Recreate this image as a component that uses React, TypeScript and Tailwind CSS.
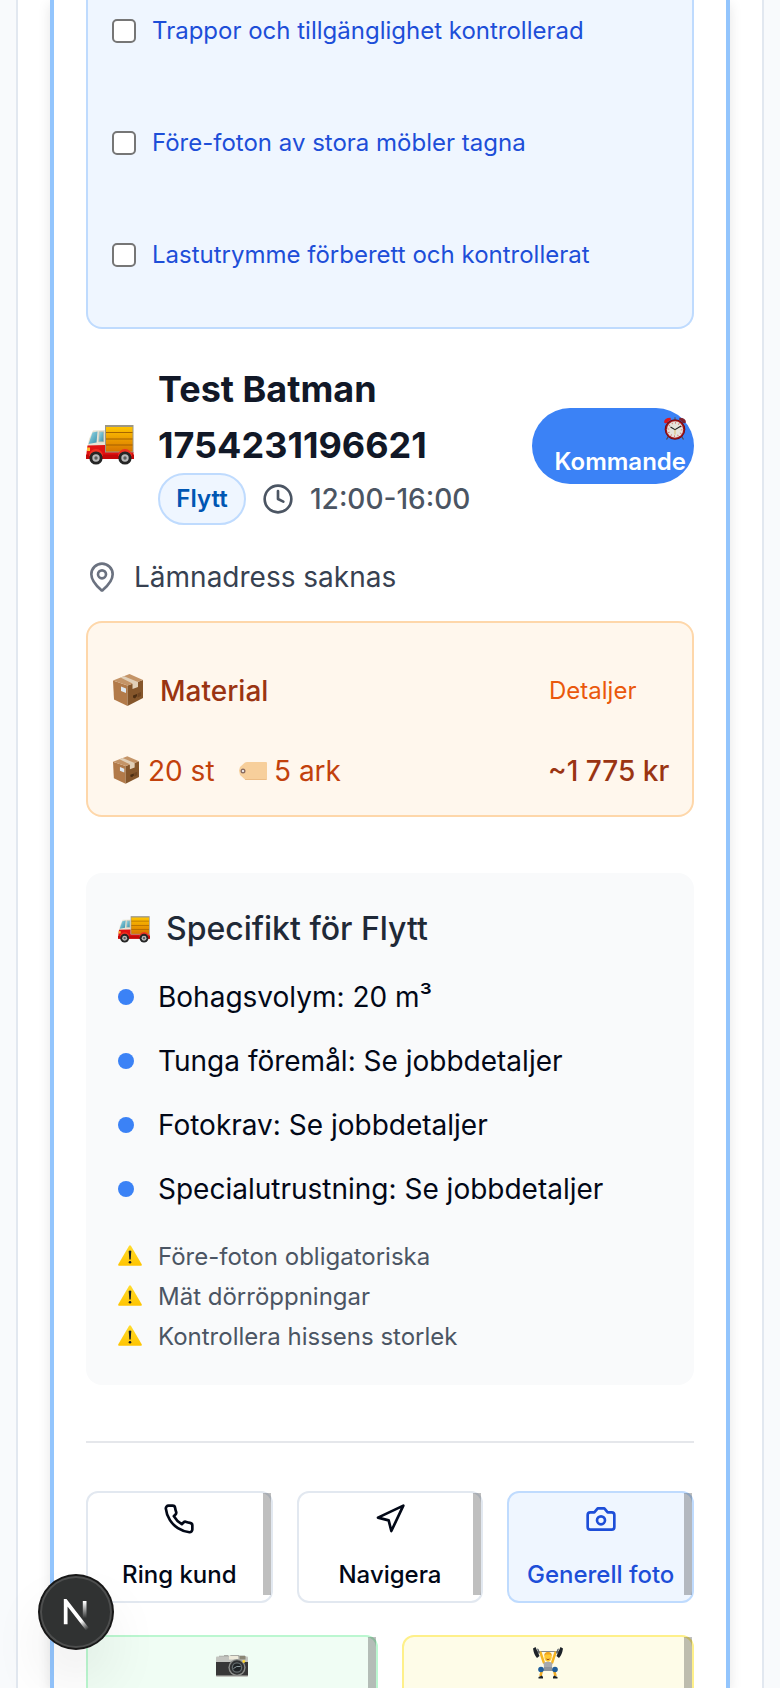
import React from "react";

const checks = [
  "Trappor och tillgänglighet kontrollerad",
  "Före-foton av stora möbler tagna",
  "Lastutrymme förberett och kontrollerat",
];

const details = [
  "Bohagsvolym: 20 m³",
  "Tunga föremål: Se jobbdetaljer",
  "Fotokrav: Se jobbdetaljer",
  "Specialutrustning: Se jobbdetaljer",
];

const warnings = ["Före-foton obligatoriska", "Mät dörröppningar", "Kontrollera hissens storlek"];

function Truck({ className }: { className: string }) {
  return (
    <svg viewBox="0 0 48 40" className={className}>
      <defs>
        <linearGradient id="cargo" x1="0" y1="0" x2="0" y2="1">
          <stop offset="0" stopColor="#ffc400" />
          <stop offset="1" stopColor="#d87500" />
        </linearGradient>
        <linearGradient id="glass" x1="0" y1="0" x2="1" y2="1">
          <stop offset="0" stopColor="#9adcea" />
          <stop offset="1" stopColor="#3a8fa8" />
        </linearGradient>
      </defs>
      <path d="M7 5.5 19 5v17H1.5L3 14z" fill="#e9e4d4" />
      <path d="M6.5 7.5 11.5 6.5 10.5 17.5 2.5 19z" fill="url(#glass)" />
      <path d="M13.3 6.8h4.4v10h-5z" fill="url(#glass)" stroke="#b7b7a5" strokeWidth=".6" />
      <path d="M1.5 20.5 19 20v7h28.5v6.500H.5V28z" fill="#e01212" />
      <path d="M0 29.500h48V34H0z" fill="#c40808" />
      <path d="M1 22.500h3v3.500H1z" fill="#ffb931" />
      <rect x="19" y="0" width="28.500" height="27.500" fill="#9c9684" />
      <rect x="20" y="2" width="26.500" height="24.500" fill="url(#cargo)" />
      <path d="M20 7.500h26.500M20 14h26.500M20 20h26.500" stroke="#9d5c00" strokeWidth=".9" />
      <path d="M3 31a7 7 0 0 1 14 0M32 31a7 7 0 0 1 14 0" fill="#ef2f20" />
      <circle cx="10" cy="33" r="6.600" fill="#252525" />
      <circle cx="10" cy="33" r="3.700" fill="#b9b9b9" />
      <circle cx="10" cy="33" r="1.700" fill="#5d5d5d" />
      <circle cx="39" cy="33" r="6.600" fill="#252525" />
      <circle cx="39" cy="33" r="3.700" fill="#b9b9b9" />
      <circle cx="39" cy="33" r="1.700" fill="#5d5d5d" />
    </svg>
  );
}

function Parcel({ className }: { className: string }) {
  return (
    <svg viewBox="0 0 30 32" className={className}>
      <path d="M0 6.500 14.500 11.500V32L1 25.500z" fill="#b27a49" />
      <path d="M14.500 11.500 30 6v18L14.500 32z" fill="#85562b" />
      <path d="M0 6.500 16.500 0 30 6 14.500 11.500z" fill="#c49467" />
      <path d="M7.500 3.600 11 2.200 25 8v5l-5.500 2V9.500z" fill="#e0cfb8" />
      <path d="M8 12.500 13 14.500v4.500L8 17z" fill="#dfe9f2" />
      <path d="M20 21.500 24 20v2l-2 2.500-2-1z" fill="#4b2d12" />
      <path d="M24.500 19.500 28 18v4l-3.500 1.500z" fill="#704521" />
    </svg>
  );
}

function Tag() {
  return (
    <svg viewBox="0 0 28 18" className="h-[18px] w-7">
      <path d="M0 8.500 1 5 6 .5Q7 0 8 0h19q1 0 1 1v16q0 1-1 1H8q-1 0-2-.5L1 13z" fill="#f7cf9b" />
      <path d="M6 17.500h21.500" stroke="#e8b87d" strokeWidth=".8" />
      <circle cx="4" cy="9" r="2.500" fill="#8b6d62" />
      <circle cx="4" cy="9" r="1.100" fill="#fff" />
    </svg>
  );
}

function AlarmClock() {
  return (
    <svg viewBox="0 0 22 24" className="h-6 w-[22px]">
      <path d="m4 20-1.500 2.500M18 20l1.500 2.500" stroke="#4a4a50" strokeWidth="1.200" />
      <path d="M0 5.500Q0 1 6.500.8L7 2.500 2 6.500z" fill="#e0141c" />
      <path d="M22 5.500Q22 1 15.500.8L15 2.500 20 6.500z" fill="#7f2230" />
      <path d="M11 .3v2" stroke="#555" strokeWidth="1.200" />
      <circle cx="11" cy="12.500" r="10.300" fill="#6d0a0e" />
      <circle cx="11" cy="12.500" r="9.600" fill="#a01217" />
      <circle cx="11" cy="12.500" r="8.200" fill="#e6e3dc" />
      <circle cx="11" cy="12.500" r="6.700" fill="none" stroke="#cc6a62" strokeWidth="1.700" strokeDasharray=".8 2.708" />
      <path d="m6.500 10 4.500 2.700 6-3.700" fill="none" stroke="#222" strokeWidth="1.100" />
      <path d="M11 12.500v5" stroke="#d8a93a" strokeWidth=".7" />
    </svg>
  );
}

function Warning() {
  return (
    <svg viewBox="0 0 24 21" className="mb-[3px] h-[21px] w-6 shrink-0">
      <defs>
        <linearGradient id="warn" x1="0" y1="0" x2="0" y2="1">
          <stop offset="0" stopColor="#ffdc2e" />
          <stop offset="1" stopColor="#ffc400" />
        </linearGradient>
      </defs>
      <path d="M11.100.8q.9-1.300 1.800 0L23.700 19.200Q24.200 20.700 23 20.800H1Q-.2 20.700.3 19.200z" fill="url(#warn)" />
      <path d="M10.700 6q1.300-1.200 2.600 0l-.6 8.500h-1.400z" fill="#151c24" />
      <circle cx="12" cy="17.300" r="1.300" fill="#151c24" />
    </svg>
  );
}

function PhotoCamera() {
  return (
    <svg viewBox="0 0 32 22" className="h-[22px] w-8">
      <path d="M3 .8h5V0h4l1 1 2-1h8v.5h6V3H3z" fill="#a9aaa5" />
      <rect x="0" y="1.500" width="32" height="20.500" rx="1" fill="#c3c4bf" />
      <rect x="0" y="7" width="32" height="13.500" fill="#373737" />
      <rect x="13" y="1" width="9" height="3.500" fill="#eeeadb" />
      <rect x="23.500" y="1" width="6" height="3.500" fill="#8b8675" />
      <circle cx="21" cy="12.500" r="8.600" fill="#8c8e8b" />
      <circle cx="21" cy="12.500" r="7.200" fill="#303233" />
      <circle cx="21" cy="12.500" r="5.300" fill="#626a6c" />
      <circle cx="21" cy="12.500" r="4" fill="#1e2224" />
      <path d="M17.500 13.500q3-3 7-2" stroke="#8b999c" strokeWidth="1" fill="none" />
      <circle cx="27.800" cy="6.500" r="1.400" fill="#ffd52f" />
    </svg>
  );
}

function Lifter() {
  return (
    <svg viewBox="0 0 30 32" className="h-8 w-[30px]">
      <path d="M4 4.500h22" stroke="#777b80" strokeWidth=".9" />
      <path d="m7.500 5.500 3.300 10M22.500 5.500l-3.300 10" stroke="#f5b522" strokeWidth="2.400" strokeLinecap="round" />
      <path d="M0 1.500 2.500 0 6.500 9 4 11Q1 8 0 1.500zM30 1.500 27.500 0l-4 9L26 11q3-3 4-9.500z" fill="#1d2329" />
      <path d="m4 1.500 1.500.5 1.500 4L5.500 7zM26 1.500l-1.500.5L23 6l1.500 1z" fill="#5d646b" />
      <path d="M10.500 16Q15 13 19.500 16L18.500 24h-7z" fill="#a7a9ac" />
      <ellipse cx="15" cy="10" rx="3.700" ry="4.700" fill="#ffc832" />
      <path d="M11.200 9Q11 5 15 5t3.800 4L17 7.500h-4z" fill="#f0a51e" />
      <path d="M13.500 12q1.500 1.300 3 0" stroke="#9d4b19" fill="none" />
      <path d="M9 23 7.500 29M21 23l1.500 6" stroke="#f0ab24" strokeWidth="2.600" />
      <path d="M11 20h8l1 4h-10z" fill="#8f9499" />
      <circle cx="8" cy="22.500" r="2.800" fill="#1f5e9c" />
      <circle cx="22" cy="22.500" r="2.800" fill="#1f5e9c" />
      <path d="M5.500 31.500v-1.500l3.500-1.500 1 1.500v1.500zM24.500 31.500v-1.500L21 28.500 20 30v1.500z" fill="#1b2024" />
    </svg>
  );
}

function Icon({ className, children }: { className?: string; children: React.ReactNode }) {
  return (
    <svg
      viewBox="0 0 24 24"
      fill="none"
      stroke="currentColor"
      strokeWidth="2"
      strokeLinecap="round"
      strokeLinejoin="round"
      className={`size-8 shrink-0 ${className ?? ""}`}
    >
      {children}
    </svg>
  );
}

function Action({ tone, label, children }: { tone: string; label: string; children: React.ReactNode }) {
  return (
    <button className={`relative flex h-28 flex-col items-center rounded-xl border-2 pt-2.5 text-2xl font-medium whitespace-nowrap ${tone}`}>
      {children}
      <span className="mt-6">{label}</span>
      <span className="absolute top-0 right-0 h-[102px] w-2 bg-black/25" />
    </button>
  );
}

export default function App() {
  return (
    <div className="h-[1688px] w-[780px] overflow-hidden bg-[#f8fafc] px-4 font-['Inter',sans-serif] text-[#020817]">
      <div className="h-full border-x-2 border-[#e2e8f0] bg-white px-8">
        <div className="flex h-full flex-col border-x-4 border-[#93c5fd] bg-white px-8 shadow-[0_4px_12px_rgba(0,0,0,0.1)]">
          <section className="flex h-[329px] shrink-0 flex-col gap-[88px] rounded-b-2xl border-2 border-t-0 border-[#bfdbfe] bg-[#eff6ff] px-6 pt-[19px]">
            {checks.map((c) => (
              <label key={c} className="flex h-6 items-center text-2xl whitespace-nowrap text-[#1d4ed8]">
                <span className="mr-4 size-6 shrink-0 rounded-[5px] border-2 border-[#767676] bg-white" />
                {c}
              </label>
            ))}
          </section>

          <header className="mt-8 flex h-[170px] shrink-0 items-center">
            <Truck className="mb-0.5 h-10 w-12 shrink-0" />
            <div className="ml-6 h-full flex-1">
              <h2 className="text-4xl leading-[56px] font-bold text-[#111827]">
                Test Batman
                <br />
                1754231196621
              </h2>
              <div className="flex h-[52px] items-center">
                <span className="flex h-[52px] w-[88px] items-center justify-center rounded-full border-2 border-[#bfdbfe] bg-[#eff6ff] text-2xl font-semibold text-[#0056b3]">
                  Flytt
                </span>
                <Icon className="ml-4 text-[#4b5563]">
                  <circle cx="12" cy="12" r="10" />
                  <path d="M12 6v6l4 2" />
                </Icon>
                <span className="ml-4 text-[28px] font-medium text-[#4b5563]">12:00-16:00</span>
              </div>
            </div>
            <div className="flex h-[76px] w-[162px] shrink-0 flex-col items-end rounded-full bg-[#3b82f6] pt-[9px] pr-2 text-2xl font-semibold text-white">
              <AlarmClock />
              <span className="mt-[5px] leading-8">Kommande</span>
            </div>
          </header>

          <div className="mt-[26px] flex h-10 shrink-0 items-center text-[28px] text-[#374151]">
            <Icon className="mr-4 text-[#6b7280]">
              <path d="M20 10c0 4.993-5.539 10.193-7.399 11.799a1 1 0 0 1-1.202 0C9.539 20.193 4 14.993 4 10a8 8 0 0 1 16 0" />
              <circle cx="12" cy="10" r="3" />
            </Icon>
            Lämnadress saknas
          </div>

          <section className="mt-6 flex h-[196px] shrink-0 flex-col gap-10 rounded-2xl border-2 border-[#fed7aa] bg-[#fff7ed] pt-12 pr-6 pl-[25px] text-[28px] text-[#c2410c]">
            <div className="flex h-10 items-center">
              <Parcel className="mb-0.5 h-8 w-[30px]" />
              <span className="ml-[17px] flex-1 font-medium text-[#9a3412]">Material</span>
              <span className="w-[120px] pl-px text-2xl text-[#ea580c]">Detaljer</span>
            </div>
            <div className="flex h-10 items-center">
              <Parcel className="mb-0.5 h-7 w-[26px]" />
              <span className="ml-[9px] w-[91px]">20 st</span>
              <Tag />
              <span className="ml-[7px] flex-1">5 ark</span>
              <span className="w-[120px] font-medium whitespace-nowrap text-[#9a3412]">~1&nbsp;775 kr</span>
            </div>
          </section>

          <section className="mt-14 h-[512px] shrink-0 rounded-2xl bg-[#f9fafb] px-8 pt-9">
            <h3 className="flex h-10 items-center text-[32px] font-medium text-[#1f2937]">
              <Truck className="mr-4 h-[27px] w-8" />
              Specifikt för Flytt
            </h3>
            <ul className="mt-7 flex flex-col gap-6 text-[28px]">
              {details.map((d) => (
                <li key={d} className="flex h-10 items-center whitespace-nowrap">
                  <span className="mr-6 size-4 rounded-full bg-[#3b82f6]" />
                  {d}
                </li>
              ))}
            </ul>
            <ul className="mt-7 text-2xl text-[#4b5563]">
              {warnings.map((w) => (
                <li key={w} className="flex h-10 items-center gap-4">
                  <Warning />
                  {w}
                </li>
              ))}
            </ul>
          </section>

          <div className="mt-14 shrink-0 border-t-2 border-[#e5e7eb] pt-12">
            <div className="grid grid-cols-3 gap-6">
              <Action tone="border-[#e2e8f0] bg-white" label="Ring kund">
                <Icon>
                  <path d="M22 16.920v3a2 2 0 0 1-2.180 2 19.790 19.790 0 0 1-8.630-3.070 19.500 19.500 0 0 1-6-6 19.790 19.790 0 0 1-3.070-8.670A2 2 0 0 1 4.110 2h3a2 2 0 0 1 2 1.720 12.840 12.840 0 0 0 .7 2.810 2 2 0 0 1-.45 2.110L8.090 9.910a16 16 0 0 0 6 6l1.270-1.270a2 2 0 0 1 2.110-.45 12.840 12.840 0 0 0 2.810.7A2 2 0 0 1 22 16.920z" />
                </Icon>
              </Action>
              <Action tone="border-[#e2e8f0] bg-white" label="Navigera">
                <Icon>
                  <path d="M3 11 22 2 13 21 11 13z" />
                </Icon>
              </Action>
              <Action tone="border-[#bfdbfe] bg-[#eff6ff] text-[#1d4ed8]" label="Generell foto">
                <Icon>
                  <path d="M14.500 4h-5L7 7H4a2 2 0 0 0-2 2v9a2 2 0 0 0 2 2h16a2 2 0 0 0 2-2V9a2 2 0 0 0-2-2h-3z" />
                  <circle cx="12" cy="13" r="3" />
                </Icon>
              </Action>
            </div>
            <div className="mt-8 grid grid-cols-2 gap-6">
              <button className="relative flex h-28 justify-center rounded-xl border-2 border-[#bbf7d0] bg-[#f0fdf4] pt-[18px]">
                <PhotoCamera />
                <span className="absolute top-0 right-0 h-[102px] w-2 bg-black/25" />
              </button>
              <button className="relative flex h-28 justify-center rounded-xl border-2 border-[#fef08a] bg-[#fefce8] pt-2.5">
                <Lifter />
                <span className="absolute top-0 right-0 h-[102px] w-2 bg-black/25" />
              </button>
            </div>
          </div>
        </div>
      </div>

      <div className="fixed top-[1576px] left-10 size-[72px] rounded-full bg-[#303232] pt-[23px] pl-[20.6px] shadow-[0_0_0_2px_#171717,inset_0_0_0_2px_rgba(255,255,255,0.14),0_32px_64px_-16px_rgba(0,0,0,0.24)]">
        <svg viewBox="0 0 16 17" fill="none" strokeWidth="1.860" className="h-[34px] w-8">
          <defs>
            <linearGradient id="diag" x1="9.956" y1="11.123" x2="15.478" y2="17.967" gradientUnits="userSpaceOnUse">
              <stop stopColor="#fff" />
              <stop offset=".604" stopColor="#fff" stopOpacity="0" />
            </linearGradient>
            <linearGradient id="stem" x1="11.822" y1="1.400" x2="11.792" y2="9.625" gradientUnits="userSpaceOnUse">
              <stop stopColor="#fff" />
              <stop offset="1" stopColor="#fff" stopOpacity="0" />
            </linearGradient>
          </defs>
          <path d="M13.300 15.200 2.340 1v11.600" stroke="url(#diag)" />
          <path d="M10.900 1h1.850v11.600H10.900z" fill="url(#stem)" />
        </svg>
      </div>
    </div>
  );
}
